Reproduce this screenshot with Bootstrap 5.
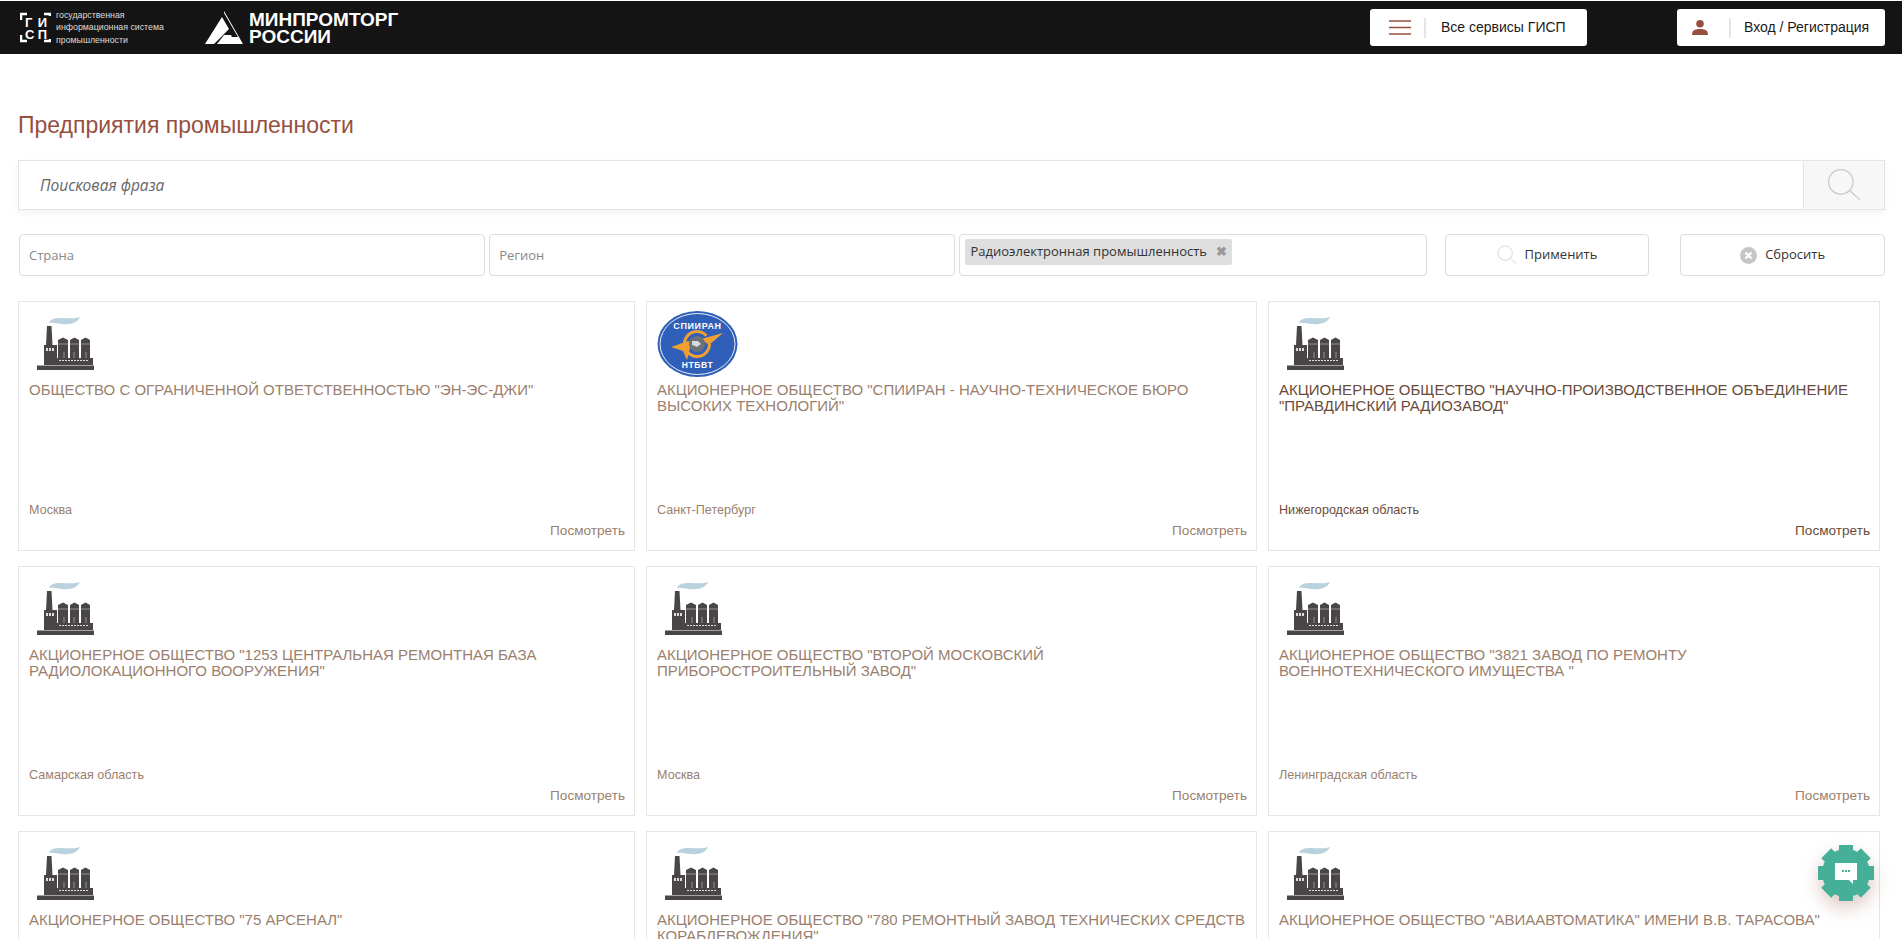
<!DOCTYPE html>
<html lang="ru">
  <head>
    <meta charset="UTF-8" />
    <meta name="viewport" content="width=device-width, initial-scale=1.0" />
    <title>Предприятия промышленности</title>
    <link
      rel="stylesheet"
      href="https://cdn.jsdelivr.net/npm/bootstrap@5.3.0/dist/css/bootstrap.min.css"
    />
    <style>
      html, body { height: 100vh; overflow: hidden; }
      body { font-family: "Liberation Sans", Arial, sans-serif; background: #fff; }
      .top-bar { height: 53px; margin-top: 1px; background: #141414; padding: 0 17px 0 20px; }
      .gisp-text { margin-left: 5px; width: 149px; color: #ddd; font-size: 8.800px; line-height: 12.500px; }
      .mpt-text { margin-left: 6px; color: #fff; font-size: 19px; font-weight: 700; line-height: 17px; }
      .top-btn { height: 37px; background: #fff; border-radius: 3px; color: #1a1a1a; font-size: 14px; }
      .top-btn .btn-sep { width: 2px; height: 20px; background: #e4e4e4; }
      .services-btn { width: 217px; margin-right: 90px; padding-left: 19px; }
      .services-btn .btn-sep { margin: 0 15px 0 13px; }
      .login-btn { width: 208px; padding-left: 15px; }
      .login-btn .btn-sep { margin: 0 13px 0 21px; }
      .page-body { padding: 0 17px 0 18px; }
      .page-title { margin: 59px 0 22px; color: #96503f; font-size: 23px; font-weight: 400; line-height: 25px; }
      .search-line { height: 50px; border: 1px solid #e4e4e4; box-shadow: 0 3px 8px rgba(0,0,0,.05); }
      .search-line input { border: 0; border-radius: 0; padding-left: 21px; font-family: "Open Sans", sans-serif; font-size: 15.500px; font-style: italic; }
      .search-line input::placeholder { color: #666; }
      .search-go { width: 81px; background: #f7f7f7; border-left: 1px solid #e4e4e4; }
      .loupe-big { color: #c8c8c8; }
      .filter-line { margin-top: 24px; height: 42px; font-family: "Open Sans", sans-serif; font-size: 13px; color: #333; }
      .filter-box { height: 42px; border: 1px solid #dcdcdc; border-radius: 4px; padding: 0 9px; color: #888; font-size: 13px; font-family: "Open Sans", sans-serif; }
      .filter-box::placeholder { color: #888; }
      .filter-country { width: 467px; margin-left: 1px; }
      .filter-region { width: 467px; margin-left: 4px; }
      .filter-chips { width: 468px; margin-left: 4px; padding: 4px 5px; }
      .chip { height: 26px; padding: 0 5px; background: #dedede; border-radius: 2px; color: #333; }
      .chip b { margin-left: 9px; color: #999; font-size: 13px; }
      .act-btn { width: 205px; height: 42px; border: 1px solid #dcdcdc; border-radius: 4px; background: #fff; color: #333; font-size: 13px; }
      .act-apply { margin-left: 18px; margin-right: 31px; }
      .firm-grid { margin-top: 25px; display: grid; grid-template-columns: 617px 611px 612px; column-gap: 11px; row-gap: 15px; width: 1862px; }
      .firm-card { height: 250px; border: 1px solid #e6e6e6; padding: 0 10px; color: #9a7f6e; }
      .firm-card.active-card { color: #6a4a38; }
      .firm-pic { height: 76px; padding: 14px 0 0 6px; }
      .firm-pic.logo-pic { padding: 9px 0 0; }
      .firm-name { margin: 0; height: 124px; font-size: 15px; line-height: 16px; text-transform: uppercase; padding-top: 4px; }
      .firm-place { font-size: 12.600px; line-height: 16px; }
      .firm-more { margin-top: 5px; margin-right: -1px; font-size: 13.600px; line-height: 16px; text-align: right; }
      .chat-gear { position: fixed; left: 1815px; top: 842px; width: 62px; height: 62px; filter: drop-shadow(0 8px 9px rgba(150,80,63,.3)); }
    </style>
  </head>
  <body>
    <svg width="0" height="0" class="position-absolute">
      <symbol id="factory" viewBox="14 6 62 56">
        <path d="M28 13c1-4 6-5 12-5 7 0 14 1 19-1-2 4-6 7-12 7-6 1-14-2-19-1z" fill="#b9d2dd" />
        <g fill="#4a4648">
          <path d="M26 16h4.500l1 19H25z" />
          <path d="M23 35h13v13h36v7H23z" />
          <path d="M37 30l5-2.500 5 2.500v18H37zM49 30l4.500-2.500L58 30v18h-9zM60 30l4.500-2.500L69 30v18h-9z" />
          <rect x="16" y="55.500" width="57" height="4.500" />
        </g>
        <path d="M25 38h2v3h-2zM28 38h2v3h-2zM31 38h2v3h-2z" fill="#ddd" />
        <path d="M38 50.500h30" stroke="#ddd" stroke-width="1.200" stroke-dasharray="2 1" />
        <path d="M36.500 34h33M43 42v6M53 42v6M65 42v6" stroke="#ddd" stroke-width=".5" />
      </symbol>
      <symbol id="loupe" viewBox="0 0 32 32">
        <circle cx="13" cy="13" r="11.500" fill="none" stroke="currentColor" stroke-width="1.200" />
        <path d="M21.500 21.500L31 30" stroke="currentColor" stroke-width="1.200" />
      </symbol>
    </svg>

    <header class="top-bar d-flex align-items-center">
      <svg width="31" height="31" viewBox="0 0 31 31">
        <path d="M1 8V2h6M24 2h6v2M1 23v6h6M24 29h6v-2" fill="none" stroke="#fff" stroke-width="2.500" />
        <text x="5" y="15" font-family="Liberation Sans" font-size="13" font-weight="700" fill="#fff" textLength="22">ГИ</text>
        <text x="5" y="27" font-family="Liberation Sans" font-size="13" font-weight="700" fill="#fff" textLength="22">СП</text>
      </svg>
      <div class="gisp-text">государственная<br />информационная система<br />промышленности</div>
      <svg width="38" height="33" viewBox="0 0 38 33">
        <path d="M19 0L38 33H25L21 26H33L19 2zM17 6L24 18 9 33H0z" fill="#fff" />
        <path d="M19 24h7l4 9H12z" fill="#fff" />
      </svg>
      <div class="mpt-text">МИНПРОМТОРГ<br />РОССИИ</div>

      <div class="ms-auto d-flex">
        <a class="top-btn services-btn d-flex align-items-center text-decoration-none" href="#">
          <svg width="22" height="15" viewBox="0 0 22 15"><path d="M0 1h22M0 7.500h22M0 14h22" stroke="#96503f" stroke-width="1.500" /></svg>
          <span class="btn-sep"></span>
          <span>Все сервисы ГИСП</span>
        </a>
        <a class="top-btn login-btn d-flex align-items-center text-decoration-none" href="#">
          <svg width="16" height="15" viewBox="0 0 16 15"><circle cx="8" cy="3.800" r="3.800" fill="#96503f" /><path d="M0 15c0-4 2-6 8-6s8 2 8 6z" fill="#96503f" /></svg>
          <span class="btn-sep"></span>
          <span>Вход / Регистрация</span>
        </a>
      </div>
    </header>

    <main class="page-body">
      <h1 class="page-title">Предприятия промышленности</h1>

      <div class="search-line d-flex">
        <input type="text" class="form-control h-100 shadow-none" placeholder="Поисковая фраза" />
        <button class="search-go btn rounded-0 p-0 d-flex align-items-center justify-content-center flex-shrink-0" type="button">
          <svg class="loupe-big" width="34" height="34"><use href="#loupe" /></svg>
        </button>
      </div>

      <div class="filter-line d-flex">
        <input class="filter-box filter-country form-control shadow-none" placeholder="Страна" />
        <input class="filter-box filter-region form-control shadow-none" placeholder="Регион" />
        <div class="filter-box filter-chips d-flex align-items-start">
          <span class="chip d-flex align-items-center">Радиоэлектронная промышленность <b>✖</b></span>
        </div>
        <button class="act-btn act-apply btn p-0 d-flex align-items-center justify-content-center gap-2" type="button">
          <svg class="loupe-big" width="20" height="20"><use href="#loupe" /></svg>Применить
        </button>
        <button class="act-btn btn p-0 d-flex align-items-center justify-content-center gap-2" type="button">
          <svg width="17" height="17" viewBox="0 0 17 17"><circle cx="8.500" cy="8.500" r="8.500" fill="#c4c6c8" /><path d="M5.500 5.500l6 6M11.500 5.500l-6 6" stroke="#fff" stroke-width="2.200" /></svg>Сбросить
        </button>
      </div>

      <div class="firm-grid">
        <div class="firm-card d-flex flex-column">
          <div class="firm-pic"><svg width="62" height="56"><use href="#factory" /></svg></div>
          <p class="firm-name">Общество с ограниченной ответственностью "ЭН-ЭС-ДЖИ"</p>
          <div class="firm-place">Москва</div>
          <div class="firm-more">Посмотреть</div>
        </div>
        <div class="firm-card d-flex flex-column">
          <div class="firm-pic logo-pic">
            <svg width="81" height="66" viewBox="0 0 81 66">
              <ellipse cx="40.500" cy="33" rx="40" ry="33" fill="#2f5fb8" />
              <ellipse cx="40.500" cy="33" rx="37.500" ry="30.500" fill="none" stroke="#e8eef8" stroke-width="1" />
              <text x="40.500" y="18" text-anchor="middle" font-family="Liberation Sans" font-size="9" font-weight="700" letter-spacing=".6" fill="#fff">СПИИРАН</text>
              <text x="40.500" y="57" text-anchor="middle" font-family="Liberation Sans" font-size="8.500" font-weight="700" letter-spacing=".6" fill="#fff">НТБВТ</text>
              <circle cx="40" cy="33" r="12.500" fill="none" stroke="#f0a030" stroke-width="3" stroke-dasharray="30 9" />
              <path d="M14 36l17-6 6 3-4 4-3 12-4-9z" fill="#f0a030" />
              <path d="M44 28l22-6-14 12z" fill="#f0a030" />
              <circle cx="40" cy="33" r="8" fill="#6d7278" />
              <path d="M35 30h6l3 3-4 3-5-2z" fill="#d6d8da" />
            </svg>
          </div>
          <p class="firm-name">Акционерное общество "СПИИРАН - Научно-техническое бюро высоких технологий"</p>
          <div class="firm-place">Санкт-Петербург</div>
          <div class="firm-more">Посмотреть</div>
        </div>
        <div class="firm-card active-card d-flex flex-column">
          <div class="firm-pic"><svg width="62" height="56"><use href="#factory" /></svg></div>
          <p class="firm-name">Акционерное общество "Научно-производственное объединение "Правдинский радиозавод"</p>
          <div class="firm-place">Нижегородская область</div>
          <div class="firm-more">Посмотреть</div>
        </div>
        <div class="firm-card d-flex flex-column">
          <div class="firm-pic"><svg width="62" height="56"><use href="#factory" /></svg></div>
          <p class="firm-name">Акционерное общество "1253 Центральная ремонтная база радиолокационного вооружения"</p>
          <div class="firm-place">Самарская область</div>
          <div class="firm-more">Посмотреть</div>
        </div>
        <div class="firm-card d-flex flex-column">
          <div class="firm-pic"><svg width="62" height="56"><use href="#factory" /></svg></div>
          <p class="firm-name">Акционерное общество "Второй московский приборостроительный завод"</p>
          <div class="firm-place">Москва</div>
          <div class="firm-more">Посмотреть</div>
        </div>
        <div class="firm-card d-flex flex-column">
          <div class="firm-pic"><svg width="62" height="56"><use href="#factory" /></svg></div>
          <p class="firm-name">Акционерное общество "3821 завод по ремонту военнотехнического имущества "</p>
          <div class="firm-place">Ленинградская область</div>
          <div class="firm-more">Посмотреть</div>
        </div>
        <div class="firm-card d-flex flex-column">
          <div class="firm-pic"><svg width="62" height="56"><use href="#factory" /></svg></div>
          <p class="firm-name">Акционерное общество "75 Арсенал"</p>
        </div>
        <div class="firm-card d-flex flex-column">
          <div class="firm-pic"><svg width="62" height="56"><use href="#factory" /></svg></div>
          <p class="firm-name">Акционерное общество "780 ремонтный завод технических средств кораблевождения"</p>
        </div>
        <div class="firm-card d-flex flex-column">
          <div class="firm-pic"><svg width="62" height="56"><use href="#factory" /></svg></div>
          <p class="firm-name">Акционерное общество "Авиаавтоматика" имени В.В. Тарасова"</p>
        </div>
      </div>
    </main>

    <svg class="chat-gear" viewBox="0 0 62 62">
      <g fill="#45b097">
        <circle cx="31" cy="31" r="24" />
        <rect x="24" y="3" width="14" height="56" />
        <rect x="24" y="3" width="14" height="56" transform="rotate(45 31 31)" />
        <rect x="24" y="3" width="14" height="56" transform="rotate(90 31 31)" />
        <rect x="24" y="3" width="14" height="56" transform="rotate(135 31 31)" />
      </g>
      <path d="M20 21h22v17h-4v4l-4-4H20z" fill="#fff" />
      <path d="M27 29h8" stroke="#45b097" stroke-width="2" stroke-dasharray="2 1" />
    </svg>

    <script src="https://cdn.jsdelivr.net/npm/bootstrap@5.3.0/dist/js/bootstrap.bundle.min.js"></script>
  </body>
</html>
